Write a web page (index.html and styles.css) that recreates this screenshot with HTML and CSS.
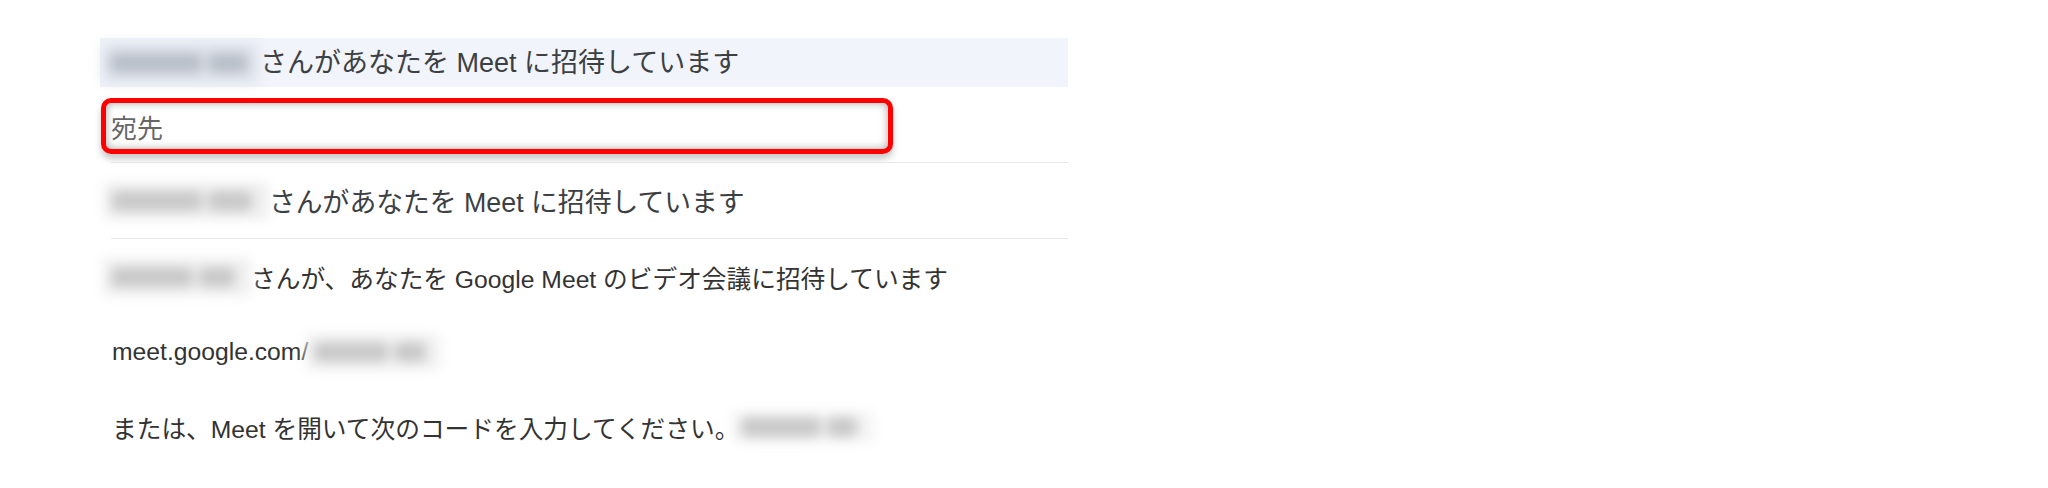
FILE: index.html
```html
<!DOCTYPE html>
<html lang="ja">
<head>
    <meta charset="UTF-8">
    <meta name="viewport" content="width=device-width, initial-scale=1.0">
    <title>Meet への招待</title>
    <link rel="stylesheet" href="styles.css">
</head>
<body>
    <div class="mail">
        <div class="subject">
            <span class="blur blur-subject"><i class="w1"></i><i class="w2"></i></span>
            <span class="subject-text">さんがあなたを Meet に招待しています</span>
        </div>

        <div class="to-row">
            <div class="to-box">宛先</div>
        </div>
        <div class="rule"></div>

        <div class="title">
            <span class="blur blur-title"><i class="w1"></i><i class="w2"></i></span>
            <span>さんがあなたを Meet に招待しています</span>
        </div>
        <div class="rule"></div>

        <div class="body">
            <p class="line">
                <span class="blur blur-body"><i class="w1"></i><i class="w2"></i></span>
                <span>さんが、あなたを Google Meet のビデオ会議に招待しています</span>
            </p>
            <p class="line line-text">
                <span>meet.google.com/</span>
                <span class="blur blur-link"><i class="w1"></i><i class="w2"></i></span>
            </p>
            <p class="line line-text">
                <span>または、Meet を開いて次のコードを入力してください。</span>
                <span class="blur blur-code"><i class="w1"></i><i class="w2"></i></span>
            </p>
        </div>
    </div>
</body>
</html>
```

FILE: styles.css
```css
body {
    margin: 0;
    background-color: #fff;
    font-family: "Liberation Sans", "Noto Sans CJK JP", sans-serif;
    color: #3c4043;
}

.mail {
    width: 968px;
    margin: 38px 0 0 100px;
}

/* subject bar */
.subject {
    display: flex;
    align-items: center;
    height: 49px;
    padding-bottom: 5px;
    box-sizing: border-box;
    background-color: #f1f4fa;
    font-size: 27px;
}

.subject-text {
    margin-left: 2px;
}

/* blurred names and codes */
.blur {
    display: flex;
    align-items: center;
    gap: 6px;
    padding: 0 8px;
    box-sizing: border-box;
    filter: blur(6px);
}

.blur i {
    display: block;
    height: 20px;
    border-radius: 6px;
}

.blur-subject {
    width: 156px;
    height: 40px;
    margin: 5px 0 0 2px;
    background-color: #dfe3eb;
}

.blur-subject i {
    background-color: #b9bfc9;
}

.blur-subject .w1 { width: 92px; }
.blur-subject .w2 { width: 40px; }

.blur-title {
    width: 164px;
    height: 36px;
    margin-left: 4px;
    background-color: #eeeeee;
}

.blur-body {
    width: 148px;
    height: 38px;
    margin-left: 3px;
    margin-right: 0;
    background-color: #f0f0f0;
}

.blur-link {
    width: 134px;
    height: 36px;
    margin-left: -2px;
    background-color: #f1f1f1;
}

.blur-code {
    width: 140px;
    height: 30px;
    margin-left: -6px;
    background-color: #f3f3f3;
}

.blur-title i,
.blur-body i,
.blur-link i,
.blur-code i {
    background-color: #c9c9c9;
}

.blur-title .w1 { width: 90px; }
.blur-title .w2 { width: 44px; }
.blur-body .w1 { width: 82px; }
.blur-body .w2 { width: 36px; }
.blur-link .w1 { width: 74px; }
.blur-link .w2 { width: 32px; }
.blur-code .w1 { width: 80px; }
.blur-code .w2 { width: 30px; }

/* recipient field, highlighted */
.to-row {
    height: 75px;
    padding-top: 11px;
    box-sizing: border-box;
}

.to-box {
    display: flex;
    align-items: center;
    width: 792px;
    height: 56px;
    margin-left: 1px;
    padding-left: 5px;
    box-sizing: border-box;
    border: 5px solid #f00;
    border-radius: 10px;
    font-size: 26px;
    color: #666;
    box-shadow: inset 0 0 9px rgba(0, 0, 0, 0.35), 0 5px 6px rgba(0, 0, 0, 0.22);
}

.rule {
    height: 1px;
    margin-left: 11px;
    background-color: #e6e8eb;
}

.title {
    display: flex;
    align-items: center;
    height: 75px;
    font-size: 26.8px;
}

.title span:last-child {
    margin-left: 1px;
}

/* message body */
.body {
    font-size: 24.7px;
    color: #333;
}

.line {
    display: flex;
    align-items: center;
    height: 75px;
    margin: 0;
}

.line-text {
    padding-left: 12px;
}
```
